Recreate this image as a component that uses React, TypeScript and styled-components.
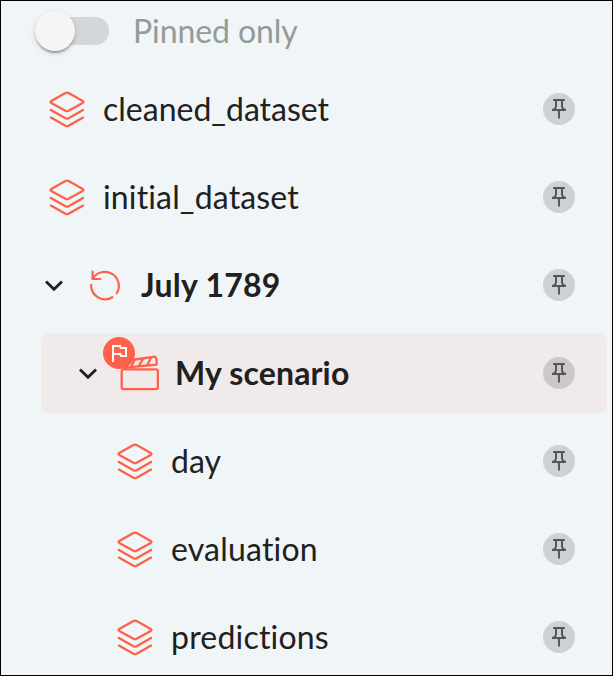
import React from "react";
import styled, { createGlobalStyle } from "styled-components";

const GlobalStyle = createGlobalStyle`
  *, *::before, *::after { box-sizing: border-box; }
  body { margin: 0; background: #f0f5f7; }
`;

const ACCENT = "#ff6049";

const Panel = styled.div`
  width: 613px;
  height: 676px;
  overflow: hidden;
  border: 1px solid #000;
  background: #f0f5f7;
  color: #1f2020;
  font-family: Lato, sans-serif;
  font-size: 32px;
  line-height: 48px;
  font-variant-ligatures: none;
`;

const FilterBar = styled.label`
  display: flex;
  align-items: center;
  height: 60px;
  padding-left: 34px;
`;

const SwitchTrack = styled.span`
  width: 74px;
  height: 28px;
  border-radius: 14px;
  background: #d3d7d9;
  display: flex;
  align-items: center;
`;

const SwitchThumb = styled.span`
  width: 40px;
  height: 40px;
  border-radius: 50%;
  background: #f5f5f5;
  box-shadow: 0 4px 2px -2px rgba(0, 0, 0, 0.2), 0 2px 2px rgba(0, 0, 0, 0.14),
    0 2px 6px rgba(0, 0, 0, 0.12);
`;

const FilterLabel = styled.span`
  margin-left: 24px;
  color: #969999;
  letter-spacing: -0.08px;
`;

const Tree = styled.div`
  display: flex;
  flex-direction: column;
  gap: 8px;
  margin-top: 8px;
  padding: 0 5px 0 40px;
`;

const Row = styled.div<{ $indent: number; $selected?: boolean }>`
  display: flex;
  align-items: center;
  height: 80px;
  padding: 0 32px 0 ${(p) => p.$indent}px;
  border-radius: 8px;
  background: ${(p) => (p.$selected ? "#f0eaea" : "transparent")};
`;

const Label = styled.span<{ $bold?: boolean; $tracking: number }>`
  flex: 1;
  margin-left: 16px;
  font-weight: ${(p) => (p.$bold ? 700 : 400)};
  letter-spacing: ${(p) => p.$tracking}px;
  white-space: nowrap;
`;

const PinButton = styled.span<{ $selected?: boolean }>`
  display: flex;
  align-items: center;
  justify-content: center;
  width: 32px;
  height: 32px;
  border-radius: 50%;
  background: ${(p) => (p.$selected ? "#cdc8c8" : "#cdd1d3")};
`;

const IconBox = styled.span`
  position: relative;
  display: flex;
  width: 40px;
  height: 40px;
`;

const ToggleBox = styled.span`
  display: flex;
  width: 26px;
  margin-right: 18px;
`;

const Badge = styled.span`
  position: absolute;
  left: -16px;
  top: -16px;
  display: flex;
  align-items: center;
  justify-content: center;
  width: 32px;
  height: 32px;
  border-radius: 50%;
  background: ${ACCENT};
`;

const Chevron = () => (
  <ToggleBox>
    <svg width="26" height="26" viewBox="0 0 26 26" fill="none" stroke="#1f2020" strokeWidth="2.8">
      <path d="M5 9.4l8 7.8 8-7.8" />
    </svg>
  </ToggleBox>
);

const DatasetIcon = () => (
  <IconBox>
    <svg width="40" height="40" viewBox="0 0 40 40" fill="none" stroke={ACCENT} strokeWidth="2.3" strokeLinecap="round" strokeLinejoin="round">
      <path d="M18.4 4Q20 3.2 21.6 4L35.7 11.9Q37.2 12.9 35.7 13.9L21.6 21.7Q20 22.5 18.4 21.7L4.3 13.9Q2.8 12.9 4.3 11.9Z" />
      <path d="M3.9 20.9L18.4 29.2Q20 30 21.6 29.2L36.1 20.9" />
      <path d="M3.9 28.6L18.4 36.7Q20 37.5 21.6 36.7L36.1 28.6" />
    </svg>
  </IconBox>
);

const CycleIcon = () => (
  <IconBox>
    <svg width="40" height="40" viewBox="0 0 40 40" fill="none" stroke={ACCENT} strokeWidth="2.2" strokeLinecap="round">
      <path d="M7.8 13.6A14 14 0 0 1 31.8 28.2" />
      <path d="M6.1 19.8A14 14 0 0 0 27.4 32.2" />
      <path d="M7.6 6.6v7.4h7.8" />
    </svg>
  </IconBox>
);

const ScenarioIcon = () => (
  <IconBox>
    <svg width="40" height="40" viewBox="0 0 40 40" fill="none" stroke={ACCENT} strokeWidth="2.3" strokeLinejoin="round">
      <rect x="2.7" y="16.4" width="36.2" height="19.8" rx="2" />
      <path d="M4 14.9L37.5 11.7Q38 6.4 36.8 4.6Q36 3.6 34.4 3.8L12 7" />
      <path d="M12.2 13.6L15.8 6.6M19.8 13L24.4 5.4M28.2 12.4L32 4.4" />
    </svg>
    <Badge>
      <svg width="24" height="24" viewBox="0 0 24 24" fill="#fff">
        <path d="M12.36 6l.4 2H18v6h-3.36l-.4-2H7V6h5.36M14 4H5v17h2v-7h5.6l.4 2h7V6h-5.6L14 4z" />
      </svg>
    </Badge>
  </IconBox>
);

const PinIcon = () => (
  <svg width="24" height="24" viewBox="0 0 24 24" fill="#555757">
    <path d="M14 4v5c0 1.12.37 2.16 1 3H9c.65-.86 1-1.9 1-3V4h4m3-2H7c-.55 0-1 .45-1 1s.45 1 1 1h1v5c0 1.66-1.34 3-3 3v2h5.97v7l1 1 1-1v-7H19v-2c-1.66 0-3-1.34-3-3V4h1c.55 0 1-.45 1-1s-.45-1-1-1z" />
  </svg>
);

type Kind = "dataset" | "cycle" | "scenario";

interface Item {
  label: string;
  kind: Kind;
  indent: number;
  tracking: number;
  selected?: boolean;
}

const items: Item[] = [
  { label: "cleaned_dataset", kind: "dataset", indent: 6, tracking: 0 },
  { label: "initial_dataset", kind: "dataset", indent: 6, tracking: 0.15 },
  { label: "July 1789", kind: "cycle", indent: 0, tracking: 0.25 },
  { label: "My scenario", kind: "scenario", indent: 34, tracking: 0.15, selected: true },
  { label: "day", kind: "dataset", indent: 74, tracking: 0 },
  { label: "evaluation", kind: "dataset", indent: 74, tracking: 0.2 },
  { label: "predictions", kind: "dataset", indent: 74, tracking: 0.2 },
];

const icons: Record<Kind, React.FC> = {
  dataset: DatasetIcon,
  cycle: CycleIcon,
  scenario: ScenarioIcon,
};

export default function App() {
  return (
    <>
      <GlobalStyle />
      <Panel>
        <FilterBar>
          <SwitchTrack>
            <SwitchThumb />
          </SwitchTrack>
          <FilterLabel>Pinned only</FilterLabel>
        </FilterBar>
        <Tree>
          {items.map(({ label, kind, indent, tracking, selected }) => {
            const Icon = icons[kind];
            const expandable = kind !== "dataset";
            return (
              <Row key={label} $indent={indent} $selected={selected}>
                {expandable && <Chevron />}
                <Icon />
                <Label $bold={expandable} $tracking={tracking}>
                  {label}
                </Label>
                <PinButton $selected={selected}>
                  <PinIcon />
                </PinButton>
              </Row>
            );
          })}
        </Tree>
      </Panel>
    </>
  );
}
